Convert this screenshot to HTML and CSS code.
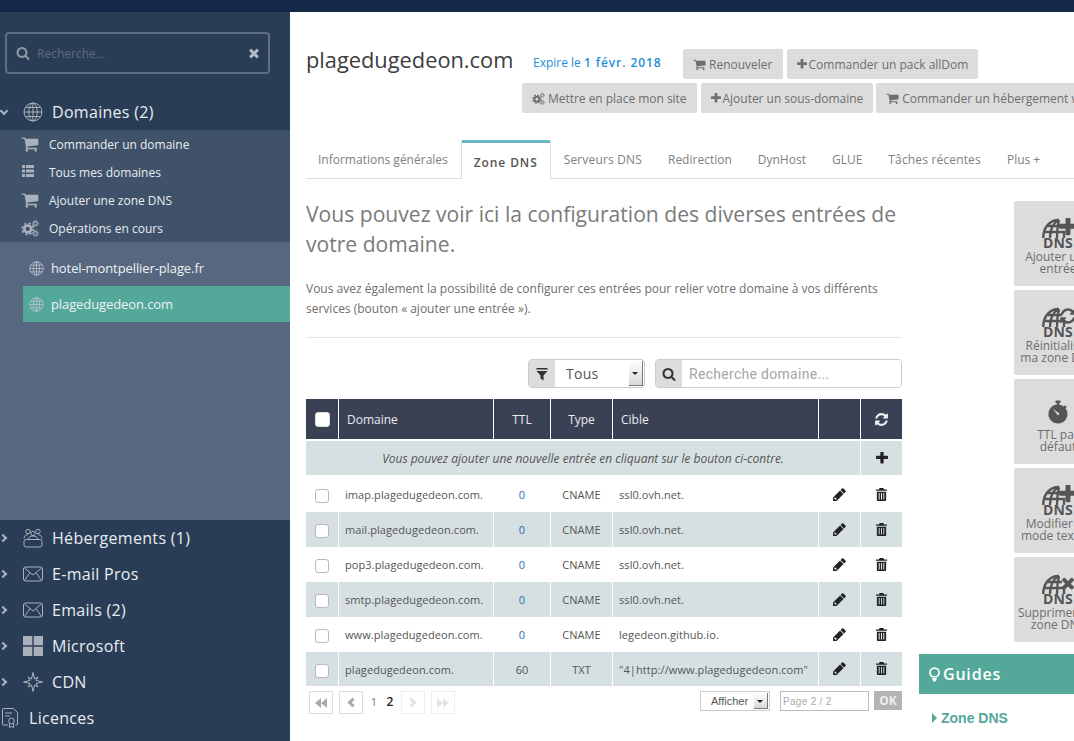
FILE: index.html
```html
<!DOCTYPE html>
<html lang="fr">
<head>
    <meta charset="UTF-8">
    <title>plagedugedeon.com - Zone DNS</title>
    <link rel="stylesheet" href="styles.css">
</head>
<body>
    <svg class="sprite" xmlns="http://www.w3.org/2000/svg">
        <symbol id="i-search" viewBox="0 0 1792 1792"><path d="M1216 832q0-185-131.5-316.5t-316.5-131.5-316.5 131.5-131.5 316.5 131.5 316.5 316.5 131.5 316.5-131.5 131.5-316.5zm512 832q0 52-38 90t-90 38q-54 0-90-38l-343-342q-179 124-399 124-143 0-273.5-55.5t-225-150-150-225-55.5-273.5 55.5-273.5 150-225 225-150 273.5-55.5 273.5 55.5 225 150 150 225 55.5 273.5q0 220-124 399l343 343q37 37 37 90z"/></symbol>
        <symbol id="i-plus" viewBox="192 192 1408 1408"><path d="M1600 736v192q0 40-28 68t-68 28h-416v416q0 40-28 68t-68 28h-192q-40 0-68-28t-28-68v-416h-416q-40 0-68-28t-28-68v-192q0-40 28-68t68-28h416v-416q0-40 28-68t68-28h192q40 0 68 28t28 68v416h416q40 0 68 28t28 68z"/></symbol>
        <symbol id="i-times" viewBox="0 0 1792 1792"><path d="M1490 1322q0 40-28 68l-136 136q-28 28-68 28t-68-28l-294-294-294 294q-28 28-68 28t-68-28l-136-136q-28-28-28-68t28-68l294-294-294-294q-28-28-28-68t28-68l136-136q28-28 68-28t68 28l294 294 294-294q28-28 68-28t68 28l136 136q28 28 28 68t-28 68l-294 294 294 294q28 28 28 68z"/></symbol>
        <symbol id="i-cart" viewBox="0 0 1792 1792"><path d="M704 1536q0 52-38 90t-90 38-90-38-38-90 38-90 90-38 90 38 38 90zm896 0q0 52-38 90t-90 38-90-38-38-90 38-90 90-38 90 38 38 90zm128-1088v512q0 24-16.5 42.5t-40.5 21.5l-1044 122q13 60 13 70 0 16-24 64h920q26 0 45 19t19 45-19 45-45 19h-1024q-26 0-45-19t-19-45q0-11 8-31.5t16-36 21.5-40 15.5-29.5l-177-823h-204q-26 0-45-19t-19-45 19-45 45-19h256q16 0 28.5 6.5t19.5 15.5 13 24.5 8 26 5.5 29.5 4.5 26h1201q26 0 45 19t19 45z"/></symbol>
        <symbol id="i-pencil" viewBox="0 0 1792 1792"><path d="M491 1536l91-91-235-235-91 91v107h128v128h107zm469-1120l416 416-832 832h-416v-416zm683 96q0 53-37 90l-166 166-416-416 166-165q36-38 90-38 53 0 91 38l235 234q37 39 37 91z"/></symbol>
        <symbol id="i-trash" viewBox="0 0 14 14"><path fill-rule="evenodd" d="M5 0h4l.8 1.500H13V3H1V1.500h3.200zM2 4h10v9a1 1 0 0 1-1 1H3a1 1 0 0 1-1-1zM4 5.500v7h1v-7zM6.500 5.500v7h1v-7zM9 5.500v7h1v-7z"/></symbol>
        <symbol id="i-refresh" viewBox="0 0 1792 1792"><path d="M1639 1056q0 5-1 7-64 268-268 434.5t-478 166.5q-146 0-282.5-55t-243.5-157l-129 129q-19 19-45 19t-45-19-19-45v-448q0-26 19-45t45-19h448q26 0 45 19t19 45-19 45l-137 137q71 66 161 102t187 36q134 0 250-65t186-179q11-17 53-117 8-23 30-23h192q13 0 22.5 9.5t9.5 22.5zm25-800v448q0 26-19 45t-45 19h-448q-26 0-45-19t-19-45 19-45l138-138q-148-137-349-137-134 0-250 65t-186 179q-11 17-53 117-8 23-30 23h-199q-13 0-22.5-9.5t-9.5-22.5v-7q65-268 270-434.5t480-166.5q146 0 284 55.5t245 156.5l130-129q19-19 45-19t45 19 19 45z"/></symbol>
        <symbol id="i-filter" viewBox="0 0 14 14"><path d="M1.500 1h11v1.600h-11zM1.500 4h11L8.500 8.500V13.500L5.500 11.500V8.500z"/></symbol>
        <symbol id="i-cogs" viewBox="0 0 20 20">
            <circle cx="7.500" cy="11" r="3.800" fill="none" stroke="currentColor" stroke-width="3"/>
            <circle cx="7.500" cy="11" r="6.200" fill="none" stroke="currentColor" stroke-width="2" stroke-dasharray="2.500 2.370"/>
            <circle cx="16" cy="5" r="2" fill="none" stroke="currentColor" stroke-width="1.300"/>
            <circle cx="16" cy="5" r="3.300" fill="none" stroke="currentColor" stroke-width="1.100" stroke-dasharray="1.300 1.290"/>
            <circle cx="16" cy="16" r="2" fill="none" stroke="currentColor" stroke-width="1.300"/>
            <circle cx="16" cy="16" r="3.300" fill="none" stroke="currentColor" stroke-width="1.100" stroke-dasharray="1.300 1.290"/>
        </symbol>
        <symbol id="i-list" viewBox="0 0 14 14"><path d="M1 1h3v3H1zM5 1h8v3H5zM1 5.500h3v3H1zM5 5.500h8v3H5zM1 10h3v3H1zM5 10h8v3H5z"/></symbol>
        <symbol id="i-globe" viewBox="0 0 20 20">
            <g fill="none" stroke="currentColor" stroke-width="1">
                <circle cx="10" cy="10" r="9"/>
                <ellipse cx="10" cy="10" rx="4.200" ry="9"/>
                <path d="M10 1v18M1 10h18M2.300 5.500h15.400M2.300 14.500h15.400"/>
            </g>
        </symbol>
        <symbol id="i-mail" viewBox="0 0 20 16">
            <g fill="none" stroke="currentColor" stroke-width="1">
                <rect x="0.500" y="1" width="19" height="14" rx="2"/>
                <path d="M1.500 2l8.500 7 8.500-7M1.500 14.500l5.500-8M18.500 14.500l-5.500-8"/>
            </g>
        </symbol>
        <symbol id="i-group" viewBox="0 0 20 20">
            <g fill="none" stroke="currentColor" stroke-width="1">
                <circle cx="5" cy="3.500" r="2.200"/>
                <circle cx="15" cy="3.500" r="2.200"/>
                <circle cx="10" cy="5.500" r="2.200"/>
                <path d="M1 10.500c0-2.500 2-3.800 4-3.800M19 10.500c0-2.500-2-3.800-4-3.800M5.500 11c0-2 2-3 4.500-3s4.500 1 4.500 3"/>
                <rect x="1" y="11.500" width="18" height="7.500" rx="2"/>
            </g>
        </symbol>
        <symbol id="i-win" viewBox="0 0 20 20"><path d="M0 0h9.300v9.300H0zM10.700 0H20v9.300h-9.300zM0 10.700h9.300V20H0zM10.700 10.700H20V20h-9.300z"/></symbol>
        <symbol id="i-star" viewBox="0 0 20 20">
            <path fill="none" stroke="currentColor" stroke-width="1" d="M10 .5L11.500 7 15 5l-2 3.500 6.500 1.500-6.500 1.500 2 3.500-3.500-2-1.500 6.500L8.500 13 5 15l2-3.500L.5 10 7 8.500 5 5l3.500 2z"/>
        </symbol>
        <symbol id="i-licence" viewBox="0 0 16 20">
            <g fill="none" stroke="currentColor" stroke-width="1">
                <path d="M6 17H1.500a1 1 0 0 1-1-1V1.500a1 1 0 0 1 1-1h10l4 4V16a1 1 0 0 1-1 1h-1M3 5h7M3 8h5"/>
                <circle cx="9.500" cy="13" r="2.800"/>
                <path d="M7.500 15.500v4l2-1 2 1v-4"/>
            </g>
        </symbol>
        <symbol id="i-watch" viewBox="0 0 20 24">
            <path d="M7.500 0h5v2.500h-1.300v1.600a9 9 0 0 1 4.600 2l1.300-1.300 1.700 1.700-1.300 1.300A9.500 9.500 0 1 1 8.800 4.100V2.500H7.500z"/>
            <path fill="#dcdcdc" d="M5 8.500l6.500 4.500-1.500 2z"/>
        </symbol>
        <symbol id="i-dnsglobe" viewBox="0 0 28 20">
            <g fill="none" stroke="currentColor" stroke-width="2.400">
                <path d="M1.200 20C1.200 9 8 2 17 2M1.500 14h22M4 8h16M8 20C8 11 11 5 17 2M15 20C15 11 16 6 17 2M22 20v-6"/>
            </g>
        </symbol>
    </svg>

    <div class="topbar"></div>
    <div class="layout">
        <nav class="sidebar">
            <div class="side-search">
                <svg class="ico side-search-ico"><use href="#i-search"/></svg>
                <input class="side-search-input" type="text" placeholder="Recherche...">
                <svg class="ico side-search-clear"><use href="#i-times"/></svg>
            </div>

            <a class="nav-item open">
                <span class="chev chev-down"></span>
                <svg class="nav-ico"><use href="#i-globe"/></svg>
                Domaines (2)
            </a>
            <ul class="sub-menu">
                <li><svg class="sub-ico"><use href="#i-cart"/></svg>Commander un domaine</li>
                <li><svg class="sub-ico list-ico"><use href="#i-list"/></svg>Tous mes domaines</li>
                <li><svg class="sub-ico"><use href="#i-cart"/></svg>Ajouter une zone DNS</li>
                <li><svg class="sub-ico"><use href="#i-cogs"/></svg>Opérations en cours</li>
            </ul>
            <ul class="domain-list">
                <li><svg class="dom-ico"><use href="#i-globe"/></svg>hotel-montpellier-plage.fr</li>
                <li class="current"><svg class="dom-ico"><use href="#i-globe"/></svg>plagedugedeon.com</li>
            </ul>

            <a class="nav-item"><span class="chev"></span><svg class="nav-ico"><use href="#i-group"/></svg>Hébergements (1)</a>
            <a class="nav-item"><span class="chev"></span><svg class="nav-ico nav-ico-mail"><use href="#i-mail"/></svg>E-mail Pros</a>
            <a class="nav-item"><span class="chev"></span><svg class="nav-ico nav-ico-mail"><use href="#i-mail"/></svg>Emails (2)</a>
            <a class="nav-item"><span class="chev"></span><svg class="nav-ico"><use href="#i-win"/></svg>Microsoft</a>
            <a class="nav-item"><span class="chev"></span><svg class="nav-ico"><use href="#i-star"/></svg>CDN</a>
            <a class="nav-item nav-item-flat"><svg class="nav-ico nav-ico-lic"><use href="#i-licence"/></svg>Licences</a>
        </nav>

        <main class="main">
            <div class="head-row">
                <h1>plagedugedeon.com</h1>
                <div class="expire">Expire le <b>1 févr. 2018</b></div>
                <div class="btns">
                    <a class="btn"><svg class="btn-ico"><use href="#i-cart"/></svg>Renouveler</a>
                    <a class="btn"><svg class="btn-ico btn-ico-plus"><use href="#i-plus"/></svg>Commander un pack allDom</a>
                </div>
            </div>
            <div class="btns btns-second">
                <a class="btn"><svg class="btn-ico"><use href="#i-cogs"/></svg>Mettre en place mon site</a>
                <a class="btn"><svg class="btn-ico btn-ico-plus"><use href="#i-plus"/></svg>Ajouter un sous-domaine</a>
                <a class="btn"><svg class="btn-ico"><use href="#i-cart"/></svg>Commander un hébergement web</a>
            </div>

            <ul class="tabs">
                <li>Informations générales</li>
                <li class="active">Zone DNS</li>
                <li class="tab-wide">Serveurs DNS</li>
                <li>Redirection</li>
                <li>DynHost</li>
                <li>GLUE</li>
                <li class="tab-wide">Tâches récentes</li>
                <li>Plus +</li>
            </ul>

            <div class="columns">
                <section class="content">
                    <h2>Vous pouvez voir ici la configuration des diverses entrées de votre domaine.</h2>
                    <p class="intro">Vous avez également la possibilité de configurer ces entrées pour relier votre domaine à vos différents services (bouton « ajouter une entrée »).</p>

                    <div class="filters">
                        <div class="filter-group">
                            <span class="addon"><svg class="addon-ico"><use href="#i-filter"/></svg></span>
                            <div class="fake-select">Tous<span class="select-arrow"></span></div>
                        </div>
                        <div class="filter-group search-group">
                            <span class="addon"><svg class="addon-ico"><use href="#i-search"/></svg></span>
                            <input type="text" placeholder="Recherche domaine...">
                        </div>
                    </div>

                    <table class="dns">
                        <colgroup>
                            <col class="c-check"><col class="c-dom"><col class="c-ttl"><col class="c-type"><col class="c-cible"><col class="c-act"><col class="c-act">
                        </colgroup>
                        <thead>
                            <tr>
                                <th class="center"><input class="check check-head" type="checkbox"></th>
                                <th>Domaine</th>
                                <th class="center">TTL</th>
                                <th class="center">Type</th>
                                <th>Cible</th>
                                <th></th>
                                <th class="center"><svg class="act-ico"><use href="#i-refresh"/></svg></th>
                            </tr>
                        </thead>
                        <tbody>
                            <tr class="info">
                                <td colspan="6" class="center"><em>Vous pouvez ajouter une nouvelle entrée en cliquant sur le bouton ci-contre.</em></td>
                                <td class="center"><svg class="act-ico plus-ico"><use href="#i-plus"/></svg></td>
                            </tr>
                            <tr class="first">
                                <td class="center"><input class="check" type="checkbox"></td>
                                <td>imap.plagedugedeon.com.</td>
                                <td class="center ttl">0</td>
                                <td class="center">CNAME</td>
                                <td>ssl0.ovh.net.</td>
                                <td class="center"><svg class="act-ico"><use href="#i-pencil"/></svg></td>
                                <td class="center"><svg class="act-ico trash-ico"><use href="#i-trash"/></svg></td>
                            </tr>
                            <tr class="odd">
                                <td class="center"><input class="check" type="checkbox"></td>
                                <td>mail.plagedugedeon.com.</td>
                                <td class="center ttl">0</td>
                                <td class="center">CNAME</td>
                                <td>ssl0.ovh.net.</td>
                                <td class="center"><svg class="act-ico"><use href="#i-pencil"/></svg></td>
                                <td class="center"><svg class="act-ico trash-ico"><use href="#i-trash"/></svg></td>
                            </tr>
                            <tr>
                                <td class="center"><input class="check" type="checkbox"></td>
                                <td>pop3.plagedugedeon.com.</td>
                                <td class="center ttl">0</td>
                                <td class="center">CNAME</td>
                                <td>ssl0.ovh.net.</td>
                                <td class="center"><svg class="act-ico"><use href="#i-pencil"/></svg></td>
                                <td class="center"><svg class="act-ico trash-ico"><use href="#i-trash"/></svg></td>
                            </tr>
                            <tr class="odd">
                                <td class="center"><input class="check" type="checkbox"></td>
                                <td>smtp.plagedugedeon.com.</td>
                                <td class="center ttl">0</td>
                                <td class="center">CNAME</td>
                                <td>ssl0.ovh.net.</td>
                                <td class="center"><svg class="act-ico"><use href="#i-pencil"/></svg></td>
                                <td class="center"><svg class="act-ico trash-ico"><use href="#i-trash"/></svg></td>
                            </tr>
                            <tr>
                                <td class="center"><input class="check" type="checkbox"></td>
                                <td>www.plagedugedeon.com.</td>
                                <td class="center ttl">0</td>
                                <td class="center">CNAME</td>
                                <td>legedeon.github.io.</td>
                                <td class="center"><svg class="act-ico"><use href="#i-pencil"/></svg></td>
                                <td class="center"><svg class="act-ico trash-ico"><use href="#i-trash"/></svg></td>
                            </tr>
                            <tr class="odd last">
                                <td class="center"><input class="check" type="checkbox"></td>
                                <td>plagedugedeon.com.</td>
                                <td class="center">60</td>
                                <td class="center">TXT</td>
                                <td>"4|http://www.plagedugedeon.com"</td>
                                <td class="center"><svg class="act-ico"><use href="#i-pencil"/></svg></td>
                                <td class="center"><svg class="act-ico trash-ico"><use href="#i-trash"/></svg></td>
                            </tr>
                        </tbody>
                    </table>

                    <div class="pager">
                        <a class="page-btn"><span class="tri tri-l"></span><span class="tri tri-l"></span></a>
                        <a class="page-btn"><span class="arrow arrow-l"></span></a>
                        <span class="page-num page-first">1</span>
                        <span class="page-num page-cur">2</span>
                        <a class="page-btn disabled"><span class="arrow arrow-r"></span></a>
                        <a class="page-btn disabled"><span class="tri tri-r"></span><span class="tri tri-r"></span></a>
                        <div class="pager-right">
                            <div class="show-select">Afficher<span class="select-arrow"></span></div>
                            <input class="page-input" type="text" placeholder="Page 2 / 2">
                            <a class="page-ok">OK</a>
                        </div>
                    </div>
                </section>

                <aside class="side">
                    <div class="tiles">
                        <a class="tile">
                            <span class="dns-ico"><svg class="dns-globe"><use href="#i-dnsglobe"/></svg><svg class="dns-badge"><use href="#i-plus"/></svg><b>DNS</b></span>
                            <span class="tile-label">Ajouter une<br>entrée</span>
                        </a>
                        <a class="tile">
                            <span class="dns-ico"><svg class="dns-globe"><use href="#i-dnsglobe"/></svg><svg class="dns-badge"><use href="#i-refresh"/></svg><b>DNS</b></span>
                            <span class="tile-label">Réinitialiser<br>ma zone DNS</span>
                        </a>
                        <a class="tile">
                            <span class="dns-ico"><svg class="watch"><use href="#i-watch"/></svg></span>
                            <span class="tile-label">TTL par<br>défaut</span>
                        </a>
                        <a class="tile">
                            <span class="dns-ico"><svg class="dns-globe"><use href="#i-dnsglobe"/></svg><svg class="dns-badge"><use href="#i-plus"/></svg><b>DNS</b></span>
                            <span class="tile-label">Modifier en<br>mode textuel</span>
                        </a>
                        <a class="tile">
                            <span class="dns-ico"><svg class="dns-globe"><use href="#i-dnsglobe"/></svg><svg class="dns-badge"><use href="#i-times"/></svg><b>DNS</b></span>
                            <span class="tile-label">Supprimer ma<br>zone DNS</span>
                        </a>
                    </div>
                    <div class="guides-head">
                        <svg class="bulb" viewBox="0 0 12 16"><path fill="none" stroke="currentColor" stroke-width="1.800" d="M3.600 10.500C2 9.300 1 8 1 6a5 5 0 0 1 10 0c0 2-1 3.300-2.600 4.500z"/><path fill="currentColor" d="M3.800 11.800h4.400v2.200L7 15.500H5L3.800 14z"/></svg>
                        Guides
                    </div>
                    <a class="guide-link"><span class="guide-caret"></span>Zone DNS</a>
                </aside>
            </div>
        </main>
    </div>
</body>
</html>
```

FILE: styles.css
```css
html, body {
    margin: 0;
    height: 100%;
    overflow: hidden;
    background: #fff;
    font-family: "Open Sans", sans-serif;
    font-size: 12px;
    color: #555;
}

.sprite {
    display: none;
}

ul {
    list-style: none;
    margin: 0;
    padding: 0;
}

svg {
    fill: currentColor;
    display: block;
    flex: none;
}

.topbar {
    height: 12px;
    background: #14294a;
}

.layout {
    display: flex;
    height: 729px;
}

/* Sidebar */
.sidebar {
    width: 290px;
    flex: none;
    background: #2a3d56;
    color: #e8ecf0;
    display: flex;
    flex-direction: column;
}

.side-search {
    margin: 20px 20px 20px 5px;
    height: 42px;
    box-sizing: border-box;
    border: 2px solid #5f6e83;
    border-radius: 4px;
    display: flex;
    align-items: center;
    padding: 0 7px 0 9px;
    color: #8f99a6;
}

.side-search-ico {
    width: 14px;
    height: 14px;
    margin-right: 7px;
}

.side-search-input {
    flex: 1;
    min-width: 0;
    background: none;
    border: 0;
    outline: 0;
    padding: 0;
    font: 12px "Open Sans", sans-serif;
    color: #fff;
}

.side-search-input::placeholder {
    color: #5e6b7e;
    opacity: 1;
}

.side-search-clear {
    width: 14px;
    height: 14px;
    color: #b5bcc5;
}

.nav-item {
    height: 36px;
    display: flex;
    align-items: center;
    font-size: 16px;
    letter-spacing: 0.3px;
    color: #e8ecf0;
}

.chev {
    width: 6px;
    height: 6px;
    box-sizing: border-box;
    border-top: 2px solid #a9b1bc;
    border-right: 2px solid #a9b1bc;
    transform: rotate(45deg);
    margin: 0 17px 0 0;
    flex: none;
}

.chev-down {
    transform: rotate(135deg);
    margin: -3px 16px 0 1px;
}

.nav-ico {
    width: 20px;
    height: 20px;
    margin-right: 9px;
    color: #a9b1bc;
}

.nav-ico-mail {
    height: 16px;
}

.nav-ico-lic {
    width: 16px;
    height: 20px;
    margin: 0 11px 0 2px;
}

.sub-menu {
    background: #40526a;
    height: 112px;
    font-size: 12px;
    color: #e8ecf0;
}

.sub-menu li {
    height: 28px;
    display: flex;
    align-items: center;
    padding-left: 21px;
}

.sub-ico {
    width: 18px;
    height: 18px;
    margin-right: 10px;
    color: #a9b1bc;
}

.list-ico {
    width: 14px;
    height: 14px;
    margin-right: 14px;
    margin-top: -3px;
}

.domain-list {
    background: #56677f;
    height: 278px;
    padding-top: 8px;
    box-sizing: border-box;
    font-size: 13px;
    letter-spacing: -0.1px;
    color: #eef1f4;
}

.domain-list li {
    height: 36px;
    display: flex;
    align-items: center;
    padding-left: 29px;
}

.domain-list li.current {
    background: #53a899;
    margin-left: 23px;
    padding-left: 6px;
}

.dom-ico {
    width: 15px;
    height: 15px;
    margin-right: 7px;
    color: #bfc6cf;
}

/* Main */
.main {
    flex: 1;
    min-width: 0;
    overflow: hidden;
    padding: 37px 0 0 16px;
}

.head-row {
    display: flex;
    align-items: center;
    height: 30px;
}

h1 {
    margin: -10px 0 0;
    font-size: 21.800px;
    font-weight: 400;
    color: #3d3d3d;
    white-space: nowrap;
    width: 227px;
    flex: none;
}

.expire {
    color: #1d8fd6;
    width: 150px;
    flex: none;
    white-space: nowrap;
    margin-top: -4px;
}

.expire b {
    font-weight: 600;
    letter-spacing: 0.9px;
}

.btns {
    display: flex;
    gap: 4px;
    white-space: nowrap;
}

.btns-second {
    margin: 4px 0 0 216px;
}

.btn {
    height: 30px;
    flex: none;
    box-sizing: border-box;
    background: #dcdcdc;
    border-radius: 2px;
    padding: 0 10px;
    display: flex;
    align-items: center;
    color: #6e6e6e;
}

.btns-second .btn {
    letter-spacing: -0.03px;
}

.btns-second .btn:last-child {
    margin-left: -1px;
}

.btn-ico {
    width: 13px;
    height: 13px;
    margin-right: 3px;
}

.btn-ico-plus {
    width: 10px;
    height: 10px;
    margin-right: 2px;
}

.tabs {
    display: flex;
    margin-top: 27px;
    height: 38px;
    border-bottom: 1px solid #ddd;
    width: 768px;
    white-space: nowrap;
}

.tabs li {
    padding: 0 13px;
    line-height: 40px;
    color: #808080;
    flex: none;
}

.tabs li:first-child {
    padding-left: 12px;
}

.tabs li.tab-wide {
    letter-spacing: 0.16px;
}

.tabs li.active {
    height: 36px;
    line-height: 40px;
    border: 1px solid #ddd;
    border-top: 3px solid #69b4c7;
    border-bottom: 0;
    border-radius: 2px 2px 0 0;
    background: #fff;
    padding: 0 12px;
    color: #555;
    font-weight: 600;
    letter-spacing: 0.9px;
}

.columns {
    display: flex;
    gap: 17px;
}

.content {
    width: 596px;
    flex: none;
}

h2 {
    margin: 20px 0 0;
    font-size: 21.100px;
    line-height: 30px;
    font-weight: 400;
    color: #7b7b7b;
}

.intro {
    margin: 20px 0 0;
    line-height: 20px;
    color: #6e6e6e;
    padding-bottom: 18px;
    border-bottom: 1px solid #e6e6e6;
}

.filters {
    display: flex;
    justify-content: flex-end;
    gap: 10px;
    margin-top: 21px;
}

.filter-group {
    display: flex;
    height: 29px;
    box-sizing: border-box;
    border: 1px solid #ccc;
    border-radius: 4px;
    overflow: hidden;
}

.search-group {
    width: 247px;
}

.addon {
    width: 26px;
    background: #dcdcdc;
    display: flex;
    align-items: center;
    justify-content: center;
    color: #333;
}

.addon-ico {
    width: 14px;
    height: 14px;
}

.fake-select {
    width: 89px;
    box-sizing: border-box;
    padding-left: 11px;
    font-size: 14px;
    line-height: 27px;
    letter-spacing: 0.3px;
    color: #555;
    position: relative;
}

.select-arrow {
    position: absolute;
    right: 1px;
    top: 1px;
    bottom: 1px;
    width: 14px;
    background: linear-gradient(#fff, #d8d8d8);
    border-right: 1px solid #777;
    border-bottom: 1px solid #777;
    box-sizing: border-box;
}

.select-arrow::after {
    content: "";
    position: absolute;
    left: 3px;
    top: 50%;
    margin-top: -1px;
    border: 3px solid transparent;
    border-top-color: #222;
    border-bottom: 0;
}

.search-group input {
    flex: 1;
    min-width: 0;
    border: 0;
    outline: 0;
    padding: 0 7px;
    font: 14px Roboto, sans-serif;
    letter-spacing: 0.3px;
}

.search-group input::placeholder {
    color: #a5a5a5;
    opacity: 1;
}

.dns {
    width: 596px;
    margin-top: 11px;
    table-layout: fixed;
    border-collapse: separate;
    border-spacing: 0;
}

.c-check { width: 32px; }
.c-dom { width: 155px; }
.c-ttl { width: 57px; }
.c-type { width: 62px; }
.c-cible { width: 206px; }
.c-act { width: 42px; }

.dns th {
    height: 40px;
    padding: 0 8px;
    background: #3b4154;
    color: #e9ebef;
    font-weight: 400;
    text-align: left;
    border-left: 1px solid #fff;
    border-bottom: 2px solid #fff;
}

.dns td {
    height: 35px;
    padding: 0 6px;
    box-sizing: border-box;
    border-left: 1px solid #fff;
    white-space: nowrap;
    font-size: 11px;
    letter-spacing: 0.08px;
    color: #555;
}

.dns th:first-child,
.dns td:first-child {
    border-left: 0;
}

.dns th.center {
    text-align: center;
    padding: 0;
}

.dns td.center {
    text-align: center;
    padding: 0;
}

.dns .info td {
    height: 34px;
    background: #d6e0e2;
    font-size: 12px;
    letter-spacing: 0;
    padding: 0;
}

.dns .first td {
    height: 37px;
    padding-top: 2px;
}

.dns .last td {
    height: 34px;
}

.dns .odd td {
    background: #d6e0e2;
}

.dns td.ttl {
    color: #1d6fb5;
}

.check {
    appearance: none;
    display: block;
    margin: 0 auto;
    width: 14px;
    height: 14px;
    background: #fff;
    border: 1px solid #b8b8b8;
    border-radius: 3px;
}

.dns td .check {
    margin-top: 3px;
}

.check-head {
    width: 15px;
    height: 15px;
    border-color: #ddd;
}

.act-ico {
    width: 15px;
    height: 15px;
    margin: -1px auto 0;
    color: #222;
}

.trash-ico {
    width: 13px;
    height: 13px;
}

.plus-ico {
    width: 12px;
    height: 12px;
    margin-top: 0;
}

.dns th .act-ico {
    color: #f0f0f0;
    margin-top: 0;
}

.pager {
    display: flex;
    align-items: flex-start;
    padding: 5px 0 0 3px;
}

.page-btn {
    width: 24px;
    height: 23px;
    box-sizing: border-box;
    border: 1px solid #dcdcdc;
    margin-right: 6px;
    display: flex;
    align-items: center;
    justify-content: center;
}

.page-btn.disabled {
    border-color: #eee;
}

.tri {
    width: 0;
    height: 0;
    border: 5px solid transparent;
    border-left-width: 0;
    border-right: 6px solid #aaa;
}

.tri-r {
    border-right: 0;
    border-left: 6px solid #e4e4e4;
}

.arrow {
    width: 7px;
    height: 7px;
    box-sizing: border-box;
    border-left: 3px solid #aaa;
    border-bottom: 3px solid #aaa;
}

.arrow-l {
    transform: rotate(45deg);
    margin-left: 3px;
}

.arrow-r {
    transform: rotate(225deg);
    margin-right: 3px;
    border-color: #e4e4e4;
}

.page-num {
    font-size: 11px;
    line-height: 22px;
    width: 16px;
    text-align: center;
    color: #777;
}

.page-first {
    margin-left: -3px;
}

.page-cur {
    font-weight: 600;
    font-size: 12px;
    color: #222;
    margin-right: 3px;
}

.pager-right {
    margin-left: auto;
    display: flex;
    gap: 5px;
    align-items: flex-start;
}

.show-select {
    width: 70px;
    height: 20px;
    box-sizing: border-box;
    border: 1px solid #ccc;
    position: relative;
    font: 11px/18px "Liberation Sans", sans-serif;
    padding-left: 10px;
    color: #555;
    margin-right: 5px;
}

.page-input {
    width: 89px;
    height: 20px;
    box-sizing: border-box;
    border: 1px solid #bbb;
    padding: 0 2px;
    font: 10px "Liberation Sans", sans-serif;
    letter-spacing: 0.3px;
}

.page-input::placeholder {
    color: #aaa;
    opacity: 1;
}

.page-ok {
    width: 28px;
    height: 19px;
    background: #b3b3b3;
    color: #eee;
    font-weight: 700;
    font-size: 12px;
    line-height: 19px;
    text-align: center;
}

/* Right column */
.side {
    width: 260px;
    flex: none;
    padding-top: 22px;
}

.tiles {
    margin-left: 95px;
    display: flex;
    flex-direction: column;
    gap: 4px;
}

.tile {
    width: 88px;
    height: 85px;
    box-sizing: border-box;
    background: #dcdcdc;
    border-radius: 2px;
    display: flex;
    flex-direction: column;
    align-items: center;
    padding-top: 17px;
    color: #6e6e6e;
    text-align: center;
}

.dns-ico {
    height: 33px;
    width: 40px;
    position: relative;
    color: #555;
    display: block;
}

.dns-ico b {
    position: absolute;
    left: 0;
    right: 0;
    top: 18px;
    font-size: 14px;
    line-height: 14px;
    font-weight: 700;
    letter-spacing: 0.2px;
}

.dns-globe {
    position: absolute;
    left: 3px;
    top: 0;
    width: 30px;
    height: 20px;
}

.dns-badge {
    position: absolute;
    right: 1px;
    top: 0;
    width: 18px;
    height: 18px;
}

.watch {
    width: 20px;
    height: 25px;
    margin: 4px auto 0;
}

.tile-label {
    line-height: 12px;
    white-space: nowrap;
}

.guides-head {
    margin-top: 12px;
    height: 40px;
    background: #53a899;
    color: #fff;
    font-size: 16px;
    font-weight: 600;
    letter-spacing: 0.8px;
    display: flex;
    align-items: center;
    padding-left: 10px;
    gap: 3px;
}

.bulb {
    width: 11px;
    height: 15px;
}

.guide-link {
    display: flex;
    align-items: center;
    margin: 15px 0 0 13px;
    font: 700 14px/18px "Liberation Sans", sans-serif;
    color: #53a899;
}

.guide-caret {
    border: 5px solid transparent;
    border-left: 5px solid #53a899;
    border-right: 0;
    margin-right: 4px;
}
```
